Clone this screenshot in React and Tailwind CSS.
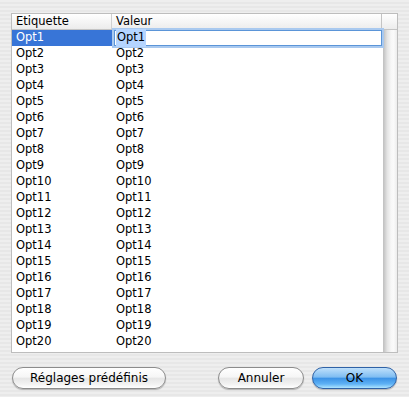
const rows = Array.from({ length: 20 }, (_, i) => `Opt${i + 1}`);

function AquaButton({ children, primary, className = '' }) {
  const skin = primary
    ? 'border-[#2f62a6] bg-[linear-gradient(180deg,#bfe0fb_0%,#7fbdf2_45%,#3d93e6_52%,#5fb2f5_80%,#aee4ff_100%)]'
    : 'border-[#8c8c8c] bg-[linear-gradient(180deg,#ffffff_0%,#f6f6f6_45%,#e6e6e6_52%,#f2f2f2_80%,#ffffff_100%)]';
  return (
    <button
      className={`h-[22px] rounded-full border text-[12px] leading-none text-black shadow-[0_1px_1px_rgba(0,0,0,0.25)] ${skin} ${className}`}
    >
      {children}
    </button>
  );
}

export default function App() {
  return (
    <div
      className="w-[409px] h-[397px] pt-[13px] px-[11px] bg-[image:repeating-linear-gradient(180deg,#eeeeee_0px,#eeeeee_2px,#e7e7e7_2px,#e7e7e7_4px)] text-black"
      style={{ fontFamily: '"DejaVu Sans", "Liberation Sans", sans-serif' }}
    >
      <div className="w-[387px] h-[340px] border border-[#bdbdbd] bg-white flex flex-col text-[11.5px]">
        <div className="flex h-[16px] border-b border-[#c4c4c4] bg-[linear-gradient(180deg,#ffffff,#ececec)]">
          <div className="w-[100px] pl-[4px] border-r border-[#d0d0d0] flex items-center">Etiquette</div>
          <div className="w-[270px] pl-[4px] border-r border-[#c4c4c4] flex items-center">Valeur</div>
          <div className="flex-1" />
        </div>
        <div className="flex flex-1 min-h-0">
          <div className="flex flex-col w-[371px]">
            {rows.map((r, i) =>
              i === 0 ? (
                <div key={r} className="flex h-[16px]">
                  <div className="w-[100px] pl-[4px] bg-[#3875d7] text-white flex items-center">{r}</div>
                  <div className="w-[271px] pl-[2px] pr-[1px] flex relative z-10">
                    <div className="flex-1 h-[16px] bg-white border border-[#5b95d8] shadow-[0_0_0_2px_#a9c9ef] flex items-center pl-[1px]">
                      <span className="bg-[#b5d5ff] px-[1px]">{r}</span>
                    </div>
                  </div>
                </div>
              ) : (
                <div key={r} className="flex h-[16px] items-center">
                  <div className="w-[100px] pl-[4px]">{r}</div>
                  <div className="w-[271px] pl-[4px]">{r}</div>
                </div>
              )
            )}
          </div>
          <div className="flex-1 border-l border-[#c4c4c4] bg-[linear-gradient(90deg,#c6c6c6_0%,#e4e4e4_25%,#f7f7f7_55%,#fafafa_75%,#ececec_100%)]" />
        </div>
      </div>
      <div className="flex items-center mt-[14px] pl-[1px] pr-[1px]">
        <AquaButton className="w-[154px]">Réglages prédéfinis</AquaButton>
        <div className="flex-1" />
        <AquaButton className="w-[86px]">Annuler</AquaButton>
        <AquaButton primary className="w-[85px] ml-[8px]">OK</AquaButton>
      </div>
    </div>
  );
}
